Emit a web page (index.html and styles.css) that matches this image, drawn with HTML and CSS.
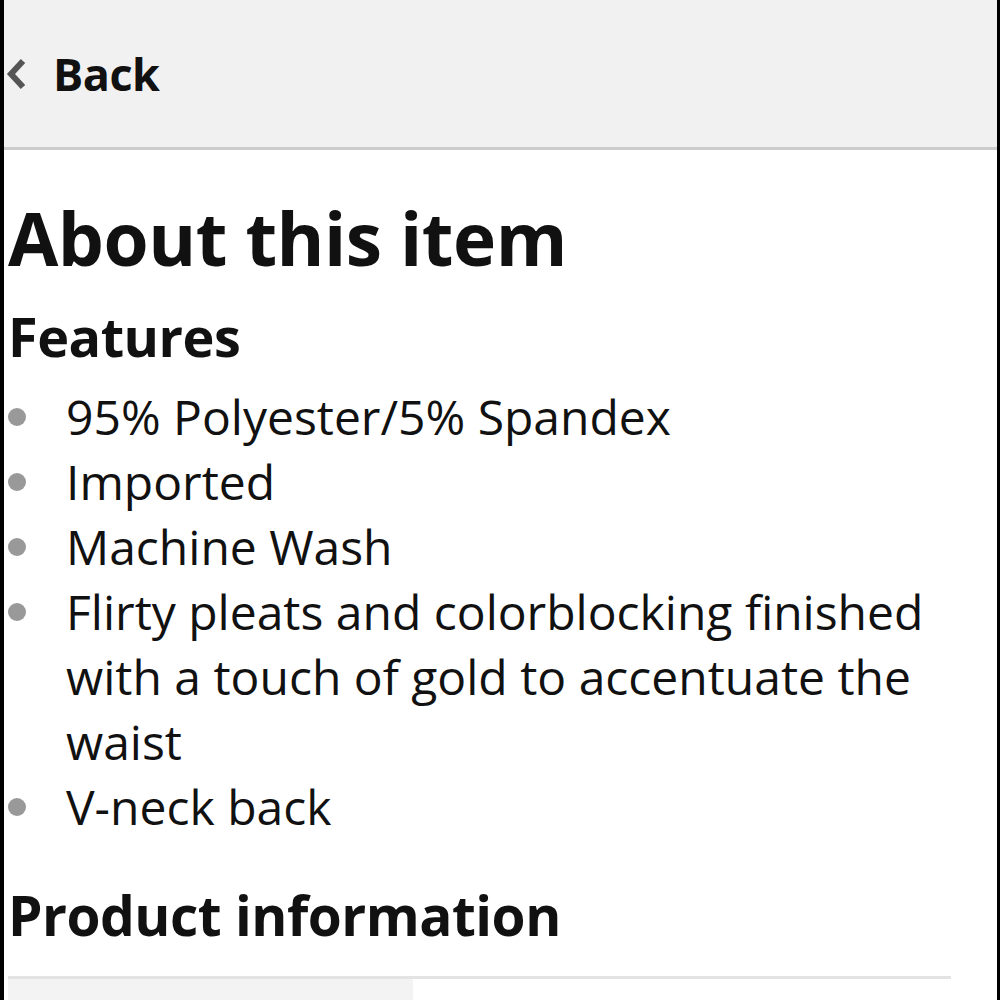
FILE: index.html
```html
<!DOCTYPE html>
<html>
<head>
<meta charset="utf-8">
<link rel="stylesheet" href="styles.css">
</head>
<body>
<div class="frame">
  <header class="topbar">
    <a class="back">
      <svg class="chev" width="22" height="32" viewBox="0 0 22 32"><path d="M17 3 L5 16 L17 29" fill="none" stroke="#555" stroke-width="6"/></svg>
      <span>Back</span>
    </a>
  </header>
  <main class="content">
    <h1 class="title">About this item</h1>
    <h2 class="sub">Features</h2>
    <ul class="features">
      <li>95% Polyester/5% Spandex</li>
      <li>Imported</li>
      <li>Machine Wash</li>
      <li>Flirty pleats and colorblocking finished with a touch of gold to accentuate the waist</li>
      <li>V-neck back</li>
    </ul>
    <h2 class="section">Product information</h2>
    <div class="table">
      <div class="cell-label"></div>
      <div class="cell-value"></div>
    </div>
  </main>
</div>
</body>
</html>
```
FILE: styles.css
```css
html, body { margin: 0; padding: 0; background: #fff; }
body { font-family: "Open Sans", "Noto Sans", sans-serif; color: #111; }
.frame {
  width: 1000px; height: 1000px; overflow: hidden;
  border-left: 4px solid #000; border-right: 3px solid #000;
  box-sizing: border-box;
}
.topbar {
  height: 147px; background: #f1f1f1; border-bottom: 3px solid #cccccc;
  display: flex; align-items: center;
}
.back { display: flex; align-items: center; gap: 25px; padding-left: 2px; }
.back span { font-size: 45px; font-weight: 700; color: #111; line-height: 1; letter-spacing: -0.5px; }
.content { padding: 0 0 0 4px; }
.title { font-size: 73px; font-weight: 700; margin: 0; line-height: 1; padding-top: 51px; letter-spacing: -0.5px; }
.sub { font-size: 54px; font-weight: 700; margin: 0; line-height: 1; padding-top: 35px; letter-spacing: -0.5px; }
.features { list-style: none; margin: 21px 0 0; padding: 0; width: 930px; }
.features li { position: relative; padding-left: 58px; font-size: 48px; line-height: 65px; color: #111; }
.features li::before {
  content: ""; position: absolute; left: 0; top: 24px;
  width: 18px; height: 18px; border-radius: 50%; background: #999;
}
.section { font-size: 55px; font-weight: 700; margin: 0; line-height: 1; padding-top: 48px; letter-spacing: -0.5px; }
.table { margin-top: 34px; width: 943px; border-top: 3px solid #e3e3e3; display: flex; height: 40px; }
.cell-label { width: 405px; background: #f3f3f3; }
.cell-value { flex: 1; }
```
